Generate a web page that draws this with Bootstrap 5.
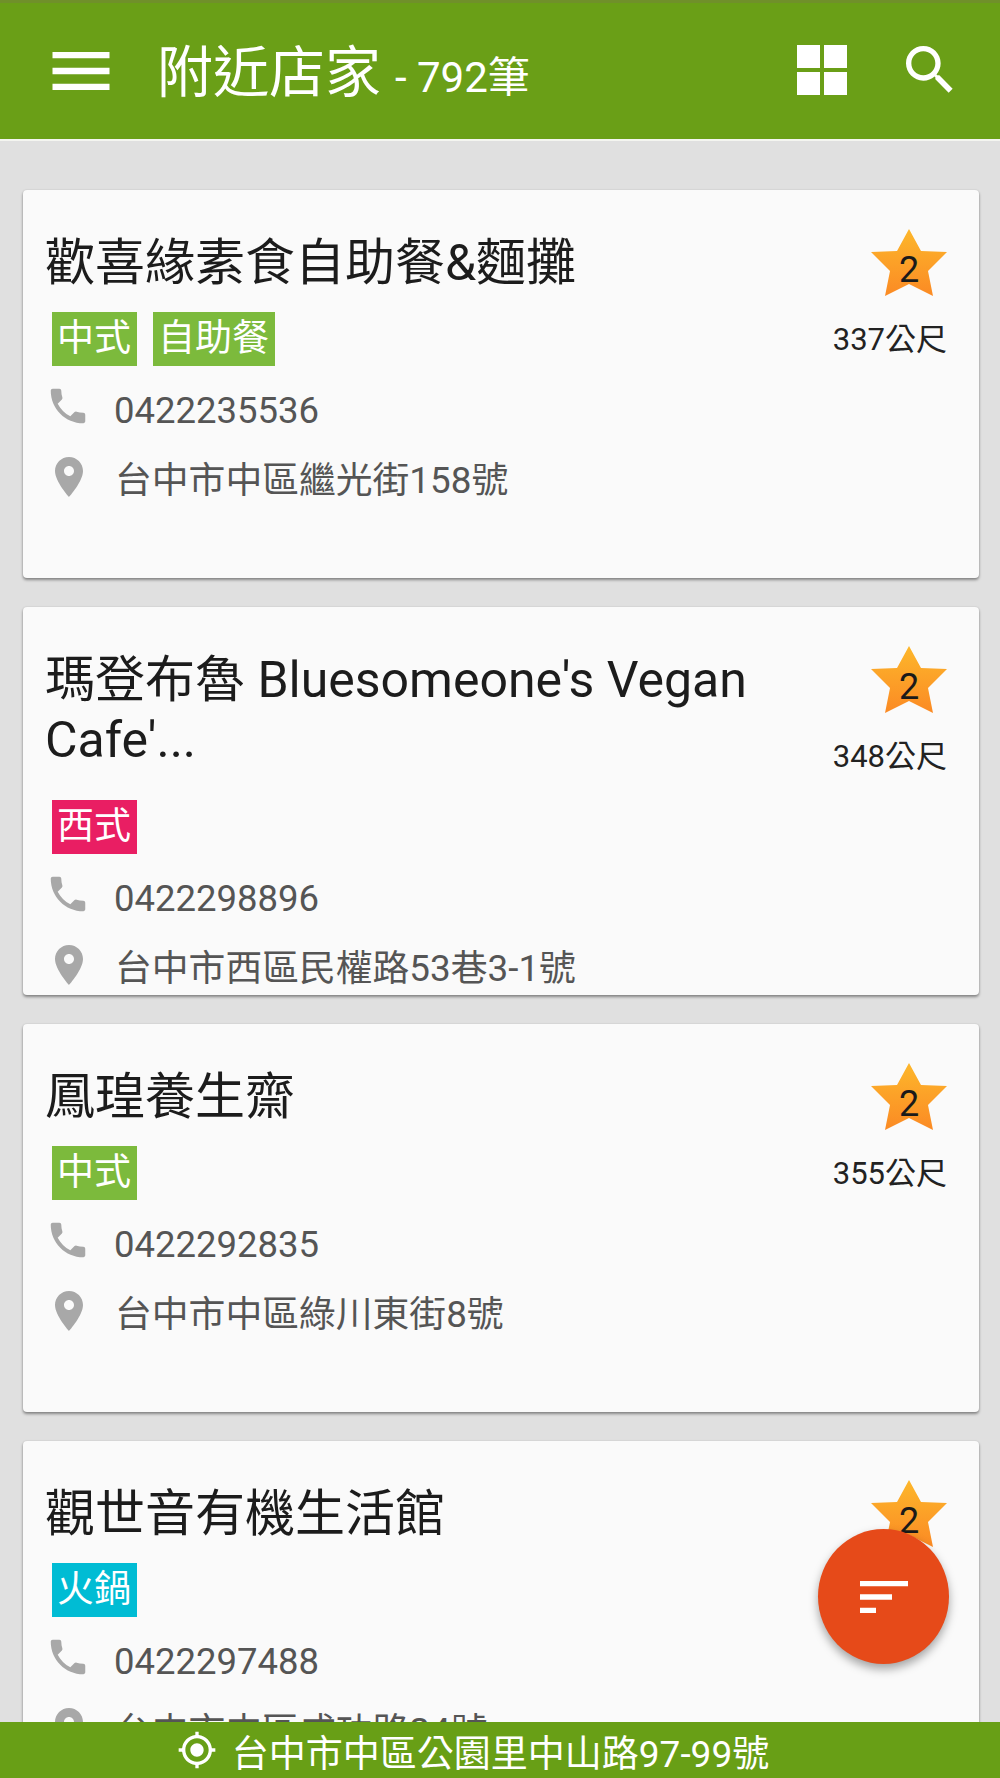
<!DOCTYPE html>
<html lang="zh-Hant">
<head>
    <meta charset="UTF-8">
    <meta name="viewport" content="width=device-width, initial-scale=1.0">
    <title>附近店家</title>
    <link rel="stylesheet" href="https://cdn.jsdelivr.net/npm/bootstrap@5.3.0/dist/css/bootstrap.min.css">
    <style>
        body { background: #e0e0e0; font-family: Roboto, "Noto Sans CJK TC", sans-serif; }
        .app-shell { height: 1778px; width: 1000px; }
        .top-bar { height: 141px; flex: none; background: #6a9f17; border-top: 3px solid #70902a; border-bottom: 2px solid #f4f5f0; color: #fff; }
        .menu-icon { width: 76px; height: 76px; margin-left: 43px; margin-top: -1px; }
        .bar-title { margin-left: 38px; margin-top: 8px; font-size: 56px; line-height: 70px; }
        .bar-count { font-size: 42px; }
        .grid-icon { width: 50px; height: 50px; margin-right: 51px; margin-top: -3px; }
        .search-icon { width: 64px; height: 64px; margin-right: 38px; margin-top: -3px; }
        .shop-list { padding: 49px 21px 0 23px; gap: 29px; }
        .shop-card { height: 388px; flex: none; padding: 43px 32px 0 22px; background: #fafafa; border: 0; border-radius: 4px; box-shadow: 0 2px 3px rgba(0,0,0,.4), 0 0 2px rgba(0,0,0,.12); }
        .shop-name { font-size: 50px; line-height: 60px; color: #1c1c1c; margin-bottom: 19px; }
        .name-wrap { margin-bottom: 30px; }
        .tag-row { gap: 16px; padding-left: 7px; margin-bottom: 10px; }
        .shop-tag { font-size: 37px; line-height: 54px; height: 54px; padding: 0 6px 0 5px; color: #fff; }
        .tag-green { background: #7cba3c; }
        .tag-pink { background: #e91e63; }
        .tag-cyan { background: #00bcd4; }
        .info-line { height: 70px; font-size: 36.5px; color: #555; }
        .info-icon { width: 46px; height: 46px; fill: #a8a8a8; margin-right: 23px; flex: none; }
        .info-phone { margin-top: -10px; }
        .info-place { font-size: 36.8px; }
        .info-addr { width: 48px; height: 48px; margin-left: 0; margin-right: 22px; margin-top: -8px; }
        .rate-col { width: 114px; flex: none; margin-top: -2px; }
        .star-box { width: 76px; height: 72px; margin-top: -3px; }
        .star-box svg { width: 100%; height: 100%; }
        .star-num { font-size: 36px; line-height: 1; color: #1a1a1a; top: 24px; left: 0; right: 0; }
        .dist-text { font-size: 31px; line-height: 40px; color: #222; margin-top: 20px; white-space: nowrap; }
        .bottom-bar { height: 56px; flex: none; padding-right: 54px; background: #689f16; color: #fff; font-size: 37px; line-height: 56px; z-index: 2; }
        .bottom-bar svg { width: 40px; height: 40px; fill: #fff; margin-right: 15px; }
        .bottom-text { margin-top: 10px; }
        .sort-fab { right: 51px; top: 1529px; width: 131px; height: 135px; background: #e64a19; box-shadow: 0 5px 10px rgba(0,0,0,.35); z-index: 3; }
        .sort-fab svg { width: 64px; height: 64px; fill: #fff; }
    </style>
</head>
<body>
    <div class="app-shell d-flex flex-column position-relative overflow-hidden">
        <header class="top-bar d-flex align-items-center">
            <svg class="menu-icon" viewBox="0 0 24 24" fill="#fff"><path d="M3 18h18v-2H3v2zm0-5h18v-2H3v2zm0-7v2h18V6H3z"/></svg>
            <div class="bar-title flex-grow-1">附近店家 <span class="bar-count">- 792筆</span></div>
            <svg class="grid-icon" viewBox="0 0 50 50" fill="#fff"><path d="M0 0h23v23H0zM27 0h23v23H27zM0 27h23v23H0zM27 27h23v23H27z"/></svg>
            <svg class="search-icon" viewBox="0 0 24 24" fill="#fff"><path d="M15.5 14h-.79l-.28-.27C15.41 12.59 16 11.11 16 9.5 16 5.91 13.09 3 9.5 3S3 5.91 3 9.5 5.91 16 9.5 16c1.61 0 3.09-.59 4.23-1.57l.27.28v.79l5 4.99L20.49 19l-4.99-5zm-6 0C7.01 14 5 11.99 5 9.5S7.01 5 9.5 5 14 7.01 14 9.5 11.99 14 9.5 14z"/></svg>
        </header>

        <main class="shop-list d-flex flex-column flex-grow-1 overflow-hidden">
            <section class="card shop-card flex-row overflow-hidden">
                <div class="flex-grow-1">
                    <div class="shop-name">歡喜緣素食自助餐&amp;麵攤</div>
                    <div class="tag-row d-flex"><span class="shop-tag tag-green">中式</span><span class="shop-tag tag-green">自助餐</span></div>
                    <div class="info-line d-flex align-items-center"><svg class="info-icon info-phone" viewBox="0 0 24 24"><path d="M6.62 10.79c1.44 2.83 3.76 5.14 6.59 6.59l2.2-2.2c.27-.27.67-.36 1.02-.24 1.12.37 2.33.57 3.57.57.55 0 1 .45 1 1V20c0 .55-.45 1-1 1-9.39 0-17-7.61-17-17 0-.55.45-1 1-1h3.5c.55 0 1 .45 1 1 0 1.25.2 2.45.57 3.57.11.35.03.74-.25 1.02l-2.2 2.2z"/></svg>0422235536</div>
                    <div class="info-line info-place d-flex align-items-center"><svg class="info-icon info-addr" viewBox="0 0 24 24"><path d="M12 2C8.13 2 5 5.13 5 9c0 5.25 7 13 7 13s7-7.75 7-13c0-3.87-3.13-7-7-7zm0 9.5c-1.38 0-2.5-1.12-2.5-2.5s1.12-2.5 2.5-2.5 2.5 1.12 2.5 2.5-1.12 2.5-2.5 2.5z"/></svg>台中市中區繼光街158號</div>
                </div>
                <div class="rate-col d-flex flex-column align-items-end">
                    <div class="star-box position-relative"><svg viewBox="0 0 76 72"><use href="#star-shape"/></svg><div class="star-num position-absolute text-center">2</div></div>
                    <div class="dist-text">337公尺</div>
                </div>
            </section>

            <section class="card shop-card flex-row overflow-hidden">
                <div class="flex-grow-1">
                    <div class="shop-name name-wrap">瑪登布魯 Bluesomeone's Vegan Cafe'...</div>
                    <div class="tag-row d-flex"><span class="shop-tag tag-pink">西式</span></div>
                    <div class="info-line d-flex align-items-center"><svg class="info-icon info-phone" viewBox="0 0 24 24"><path d="M6.62 10.79c1.44 2.83 3.76 5.14 6.59 6.59l2.2-2.2c.27-.27.67-.36 1.02-.24 1.12.37 2.33.57 3.57.57.55 0 1 .45 1 1V20c0 .55-.45 1-1 1-9.39 0-17-7.61-17-17 0-.55.45-1 1-1h3.5c.55 0 1 .45 1 1 0 1.25.2 2.45.57 3.57.11.35.03.74-.25 1.02l-2.2 2.2z"/></svg>0422298896</div>
                    <div class="info-line info-place d-flex align-items-center"><svg class="info-icon info-addr" viewBox="0 0 24 24"><path d="M12 2C8.13 2 5 5.13 5 9c0 5.25 7 13 7 13s7-7.75 7-13c0-3.87-3.13-7-7-7zm0 9.5c-1.38 0-2.5-1.12-2.5-2.5s1.12-2.5 2.5-2.5 2.5 1.12 2.5 2.5-1.12 2.5-2.5 2.5z"/></svg>台中市西區民權路53巷3-1號</div>
                </div>
                <div class="rate-col d-flex flex-column align-items-end">
                    <div class="star-box position-relative"><svg viewBox="0 0 76 72"><use href="#star-shape"/></svg><div class="star-num position-absolute text-center">2</div></div>
                    <div class="dist-text">348公尺</div>
                </div>
            </section>

            <section class="card shop-card flex-row overflow-hidden">
                <div class="flex-grow-1">
                    <div class="shop-name">鳳瑝養生齋</div>
                    <div class="tag-row d-flex"><span class="shop-tag tag-green">中式</span></div>
                    <div class="info-line d-flex align-items-center"><svg class="info-icon info-phone" viewBox="0 0 24 24"><path d="M6.62 10.79c1.44 2.83 3.76 5.14 6.59 6.59l2.2-2.2c.27-.27.67-.36 1.02-.24 1.12.37 2.33.57 3.57.57.55 0 1 .45 1 1V20c0 .55-.45 1-1 1-9.39 0-17-7.61-17-17 0-.55.45-1 1-1h3.5c.55 0 1 .45 1 1 0 1.25.2 2.45.57 3.57.11.35.03.74-.25 1.02l-2.2 2.2z"/></svg>0422292835</div>
                    <div class="info-line info-place d-flex align-items-center"><svg class="info-icon info-addr" viewBox="0 0 24 24"><path d="M12 2C8.13 2 5 5.13 5 9c0 5.25 7 13 7 13s7-7.75 7-13c0-3.87-3.13-7-7-7zm0 9.5c-1.38 0-2.5-1.12-2.5-2.5s1.12-2.5 2.5-2.5 2.5 1.12 2.5 2.5-1.12 2.5-2.5 2.5z"/></svg>台中市中區綠川東街8號</div>
                </div>
                <div class="rate-col d-flex flex-column align-items-end">
                    <div class="star-box position-relative"><svg viewBox="0 0 76 72"><use href="#star-shape"/></svg><div class="star-num position-absolute text-center">2</div></div>
                    <div class="dist-text">355公尺</div>
                </div>
            </section>

            <section class="card shop-card flex-row overflow-hidden">
                <div class="flex-grow-1">
                    <div class="shop-name">觀世音有機生活館</div>
                    <div class="tag-row d-flex"><span class="shop-tag tag-cyan">火鍋</span></div>
                    <div class="info-line d-flex align-items-center"><svg class="info-icon info-phone" viewBox="0 0 24 24"><path d="M6.62 10.79c1.44 2.83 3.76 5.14 6.59 6.59l2.2-2.2c.27-.27.67-.36 1.02-.24 1.12.37 2.33.57 3.57.57.55 0 1 .45 1 1V20c0 .55-.45 1-1 1-9.39 0-17-7.61-17-17 0-.55.45-1 1-1h3.5c.55 0 1 .45 1 1 0 1.25.2 2.45.57 3.57.11.35.03.74-.25 1.02l-2.2 2.2z"/></svg>0422297488</div>
                    <div class="info-line info-place d-flex align-items-center"><svg class="info-icon info-addr" viewBox="0 0 24 24"><path d="M12 2C8.13 2 5 5.13 5 9c0 5.25 7 13 7 13s7-7.75 7-13c0-3.87-3.13-7-7-7zm0 9.5c-1.38 0-2.5-1.12-2.5-2.5s1.12-2.5 2.5-2.5 2.5 1.12 2.5 2.5-1.12 2.5-2.5 2.5z"/></svg>台中市中區成功路24號</div>
                </div>
                <div class="rate-col d-flex flex-column align-items-end">
                    <div class="star-box position-relative"><svg viewBox="0 0 76 72"><use href="#star-shape"/></svg><div class="star-num position-absolute text-center">2</div></div>
                </div>
            </section>
        </main>

        <footer class="bottom-bar d-flex justify-content-center align-items-center">
            <svg viewBox="0 0 24 24"><path d="M12 8c-2.21 0-4 1.79-4 4s1.79 4 4 4 4-1.79 4-4-1.79-4-4-4zm8.94 3c-.46-4.17-3.77-7.48-7.94-7.94V1h-2v2.06C6.83 3.52 3.52 6.83 3.06 11H1v2h2.06c.46 4.17 3.77 7.48 7.94 7.94V23h2v-2.06c4.17-.46 7.48-3.77 7.94-7.94H23v-2h-2.06zM12 19c-3.87 0-7-3.13-7-7s3.13-7 7-7 7 3.13 7 7-3.13 7-7 7z"/></svg><span class="bottom-text">台中市中區公園里中山路97-99號</span>
        </footer>

        <button class="sort-fab btn position-absolute rounded-circle border-0 p-0 d-flex align-items-center justify-content-center" type="button" aria-label="排序">
            <svg viewBox="0 0 24 24"><path d="M3 18h6v-2H3v2zM3 6v2h18V6H3zm0 7h12v-2H3v2z"/></svg>
        </button>
    </div>

    <svg width="0" height="0" class="position-absolute">
        <defs>
            <linearGradient id="star-fill" x1="0" y1="0" x2="0" y2="1">
                <stop offset="0" stop-color="#fdb72b"/>
                <stop offset="1" stop-color="#fb8a24"/>
            </linearGradient>
            <polygon id="star-shape" fill="url(#star-fill)" points="38,1 50,23 76,24 57,43 62,68 38,56 14,68 19,43 0,24 26,23"/>
        </defs>
    </svg>
    <script src="https://cdn.jsdelivr.net/npm/bootstrap@5.3.0/dist/js/bootstrap.bundle.min.js"></script>
</body>
</html>
